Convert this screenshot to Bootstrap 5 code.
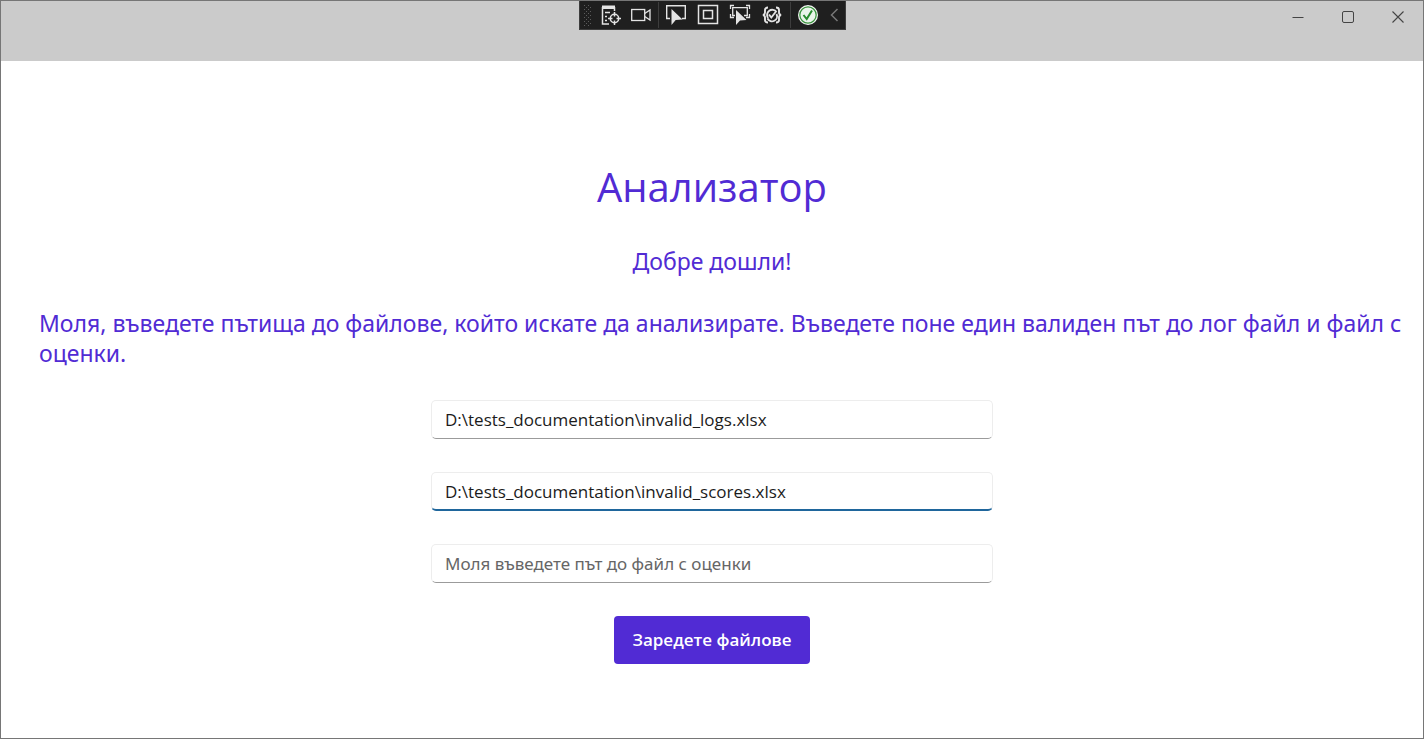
<!DOCTYPE html>
<html lang="bg">
<head>
<meta charset="utf-8">
<meta name="viewport" content="width=device-width, initial-scale=1">
<title>Анализатор</title>
<link href="https://cdn.jsdelivr.net/npm/bootstrap@5.3.0/dist/css/bootstrap.min.css" rel="stylesheet">
<style>
  :root { --brand: #512bd4; }
  body { font-family: "Open Sans", "Noto Sans", sans-serif; background: #fff; }
  .app-window { border: 1px solid #767676; }
  .title-bar { display: grid; grid-template-columns: 1fr auto 1fr; height: 60px; background: #cbcbcb; align-items: start; }
  .debug-bar { height: 29px; background: #1f1f1f; border: 1px solid #3d3d3d; border-top: 0; color: #e4e4e4; }
  .tool { width: 32px; height: 28px; padding: 0; border: 0; background: none; color: inherit; display: flex; align-items: center; justify-content: center; }
  .tool-narrow { width: 30px; }
  .tool-end { width: 21px; color: #777; }
  .divider { width: 1px; height: 26px; margin: 0 1px 0 2px; background: #3d3d3d; }
  .win-btn { width: 50px; height: 32px; padding: 0; border: 0; background: none; color: #444; display: flex; align-items: center; justify-content: center; }
  .page { padding: 99px 20px 64px; gap: 32px; color: var(--brand); }
  .page h1 { font-size: 40px; line-height: 54px; font-weight: 400; }
  .intro { font-family: "Noto Sans", "Open Sans", sans-serif; font-size: 23px; line-height: 30px; }
  .intro-text { padding-left: 18px; }
  .path-form { width: 562px; max-width: 100%; gap: 33px; }
  .path-form .form-control { height: 39px; padding: 0 13px; font-family: "Open Sans", "Noto Sans", sans-serif; font-size: 17px; line-height: 24px; color: #1b1b1b; border: 1px solid #ededed; border-bottom-color: #9b9b9b; border-radius: 5px; box-shadow: none; }
  .path-form .form-control::placeholder { font-family: "Noto Sans", sans-serif; color: #666; opacity: 1; }
  .path-form .form-control.current { border-bottom: 2px solid #1f669c; }
  .btn-load { min-width: 196px; height: 48px; padding: 0 16px; border: 0; border-radius: 4px; background: var(--brand); color: #fff; font-size: 17px; line-height: 24px; font-weight: 600; }
  .btn-load:hover { background: #4524b8; color: #fff; }
</style>
</head>
<body>
<div class="app-window min-vh-100 d-flex flex-column">
  <header class="title-bar">
    <span></span>
    <div class="debug-bar d-flex align-items-center" role="toolbar" aria-label="Отстраняване на грешки">
      <svg width="16" height="28" viewBox="0 0 16 28" fill="#5c5c5c" aria-hidden="true"><path d="M4 4h1v1H4zM8 4h1v1H8zM6 6h1v1H6zM10 6h1v1h-1zM4 8h1v1H4zM8 8h1v1H8zM6 10h1v1H6zM10 10h1v1h-1zM4 12h1v1H4zM8 12h1v1H8zM6 14h1v1H6zM10 14h1v1h-1zM4 16h1v1H4zM8 16h1v1H8zM6 18h1v1H6zM10 18h1v1h-1zM4 20h1v1H4zM8 20h1v1H8zM6 22h1v1H6zM10 22h1v1h-1zM4 24h1v1H4zM8 24h1v1H8z"/></svg>
      <button type="button" class="tool tool-narrow" aria-label="Визуално дърво"><svg width="20" height="22" viewBox="0 0 20 22" fill="none" stroke="currentColor" stroke-width="1.500"><path d="M1.500 3v17H8M13.500 3v4"/><path d="M1 1.500h13V5H1z" fill="currentColor" stroke="none"/><path d="M4 8.500h5M4 12.500h2M4 16.500h2"/><circle cx="13.500" cy="14.500" r="4.200"/><path d="M13.500 8v4.500M13.500 16.500V21M7 14.500h4.500M15.500 14.500H20"/></svg></button>
      <button type="button" class="tool tool-narrow" aria-label="Камера"><svg width="20" height="14" viewBox="0 0 20 14" fill="none" stroke="currentColor" stroke-width="1.300"><rect x=".7" y="1.500" width="13" height="11"/><path d="M13.700 5.500l5.300-3.500v10l-5.300-3.500"/></svg></button>
      <span class="divider"></span>
      <button type="button" class="tool" aria-label="Избор на елемент"><svg width="22" height="22" viewBox="0 0 22 22"><path d="M5 14.500H1.700V1.700h18.600v12.800H17" fill="none" stroke="currentColor" stroke-width="1.400"/><path d="M6.500 5v16l4.200-5L17.500 15.500z" fill="currentColor"/></svg></button>
      <button type="button" class="tool" aria-label="Граници на оформлението"><svg width="22" height="22" viewBox="0 0 22 22" fill="none" stroke="currentColor" stroke-width="1.500"><path d="M1.500 1.500h19v18h-19zM6.500 6.500h9v8h-9z"/></svg></button>
      <button type="button" class="tool" aria-label="Проследяване на фокуса"><svg width="22" height="22" viewBox="0 0 22 22"><path d="M1.500 5V1.500H5M17 1.500h3.500V5M1.500 10v3.500H5M17 13.500h3.500V10M6 11.500H3.700V3.700h14.600v7.800H15" fill="none" stroke="currentColor" stroke-width="1.300"/><path d="M7 6v15l4-4.500 6.500-.5z" fill="currentColor"/></svg></button>
      <button type="button" class="tool" aria-label="Горещо презареждане"><svg width="22" height="18" viewBox="0 0 20 18" fill="none" stroke="currentColor" stroke-width="1.900"><path d="M6 1.500Q3 1.500 3 4v2.500Q3 8.500 1 9q2 .5 2 2.500V14q0 2.500 3 2.500M14 1.500q3 0 3 2.500v2.500q0 2 2 2.500-2 .5-2 2.500V14q0 2.500-3 2.500"/><path d="M14.500 6A5 5 0 0 0 6 12M5.500 12.500a5 5 0 0 0 9-4.500M7 8.500l2.300 3L14 5.500"/></svg></button>
      <span class="divider"></span>
      <button type="button" class="tool" aria-label="Готово"><svg width="22" height="22" viewBox="0 0 22 22"><circle cx="11" cy="11" r="10" fill="#f4f6f4"/><circle cx="11" cy="11" r="8.200" fill="#eaf4ea" stroke="#3c9440" stroke-width="1.300"/><path d="M6.500 11l3.200 4L15 6.500" fill="none" stroke="#278a2d" stroke-width="2"/></svg></button>
      <button type="button" class="tool tool-end" aria-label="Свиване"><svg width="9" height="14" viewBox="0 0 9 14" fill="none" stroke="currentColor" stroke-width="1.500"><path d="M7.500 1L1.500 7l6 6"/></svg></button>
    </div>
    <div class="d-flex justify-content-end">
      <button type="button" class="win-btn" aria-label="Минимизиране"><svg width="12" height="12" viewBox="0 0 12 12" stroke="currentColor"><path d="M.5 6.500h11"/></svg></button>
      <button type="button" class="win-btn" aria-label="Максимизиране"><svg width="12" height="12" viewBox="0 0 12 12" fill="none" stroke="currentColor"><rect x=".5" y=".5" width="11" height="11" rx="1.500"/></svg></button>
      <button type="button" class="win-btn" aria-label="Затваряне"><svg width="12" height="12" viewBox="0 0 12 12" stroke="currentColor" stroke-width="1.100"><path d="M.5.5l11 11M11.500.5l-11 11"/></svg></button>
    </div>
  </header>
  <main class="page d-flex flex-column align-items-center">
    <h1 class="m-0">Анализатор</h1>
    <p class="intro m-0">Добре дошли!</p>
    <p class="intro intro-text m-0 w-100">Моля, въведете пътища до файлове, който искате да анализирате. Въведете поне един валиден път до лог файл и файл с оценки.</p>
    <form class="path-form d-flex flex-column align-items-center">
      <input type="text" class="form-control" aria-label="Път до лог файл" value="D:\tests_documentation\invalid_logs.xlsx">
      <input type="text" class="form-control current" aria-label="Път до файл с оценки" value="D:\tests_documentation\invalid_scores.xlsx">
      <input type="text" class="form-control" aria-label="Път до втори файл с оценки" placeholder="Моля въведете път до файл с оценки">
      <button type="button" class="btn btn-load">Заредете файлове</button>
    </form>
  </main>
</div>
<script src="https://cdn.jsdelivr.net/npm/bootstrap@5.3.0/dist/js/bootstrap.bundle.min.js"></script>
</body>
</html>
